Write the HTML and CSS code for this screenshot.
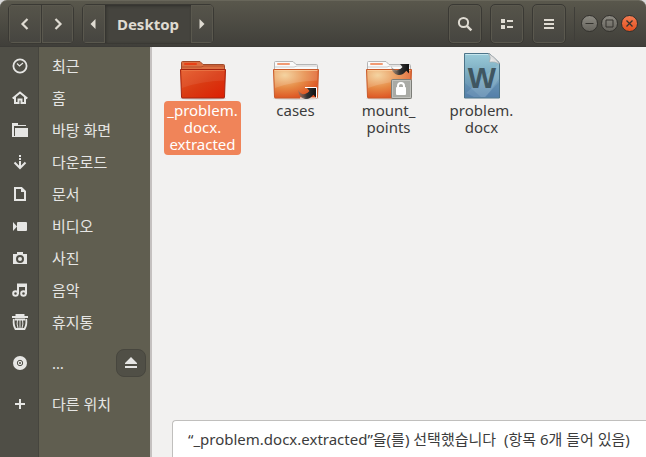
FILE: index.html
```
<!DOCTYPE html>
<html lang="ko">
<head>
  <meta charset="UTF-8" />
  <meta name="viewport" content="width=device-width, initial-scale=1" />
  <title>Desktop</title>
  <link rel="stylesheet" href="styles.css">
</head>
<body>
  <div class="window">
    <header class="titlebar">
      <div class="button-group">
        <button class="tool nav" aria-label="Back">
          <svg width="16" height="16" viewBox="0 0 16 16"><path d="M10.5 3 5.5 8l5 5" fill="none" stroke="currentColor" stroke-width="2.2"/></svg>
        </button>
        <button class="tool nav" aria-label="Forward">
          <svg width="16" height="16" viewBox="0 0 16 16"><path d="m5.5 3 5 5-5 5" fill="none" stroke="currentColor" stroke-width="2.2"/></svg>
        </button>
      </div>

      <div class="button-group">
        <button class="tool arrow" aria-label="Scroll left">
          <svg width="16" height="16" viewBox="0 0 16 16"><path d="M9.5 3v10l-5-5z" fill="currentColor"/></svg>
        </button>
        <button class="tool path">Desktop</button>
        <button class="tool arrow" aria-label="Scroll right">
          <svg width="16" height="16" viewBox="0 0 16 16"><path d="M5.5 3v10l5-5z" fill="currentColor"/></svg>
        </button>
      </div>

      <div class="tools">
        <button class="tool single" aria-label="Search">
          <svg width="16" height="16" viewBox="0 0 16 16"><circle cx="6.5" cy="6.5" r="4.6" fill="none" stroke="currentColor" stroke-width="2"/><path d="m9.8 9.8 4.6 4.6" stroke="currentColor" stroke-width="2.4"/></svg>
        </button>
        <button class="tool single" aria-label="List view">
          <svg width="16" height="16" viewBox="0 0 16 16" fill="currentColor"><path d="M2 3h4v4H2zM2 9h4v4H2zM8 4h6v2H8zM8 10h6v2H8z"/></svg>
        </button>
        <button class="tool single" aria-label="Menu">
          <svg width="16" height="16" viewBox="0 0 16 16" fill="currentColor"><path d="M3 3h10v2H3zM3 7h10v2H3zM3 11h10v2H3z"/></svg>
        </button>
      </div>

      <div class="window-buttons">
        <button aria-label="Minimize"><svg width="15" height="15" viewBox="0 0 15 15"><path d="M3.5 7.5h8" stroke="currentColor"/></svg></button>
        <button aria-label="Maximize"><svg width="15" height="15" viewBox="0 0 15 15"><path d="M4 4h7v7H4z" fill="none" stroke="currentColor"/></svg></button>
        <button class="close" aria-label="Close"><svg width="15" height="15" viewBox="0 0 15 15"><path d="m4.5 4.5 6 6m0-6-6 6" stroke="currentColor" stroke-width="1.3"/></svg></button>
      </div>
    </header>

    <div class="content">
      <nav class="sidebar">
        <a class="place" href="#">
          <svg viewBox="0 0 16 16"><circle cx="8" cy="8" r="6.6" fill="none" stroke="currentColor" stroke-width="1.8"/><path d="M5 5.5 7.500 8 11 5" fill="none" stroke="currentColor" stroke-width="1.2"/></svg>
          <span>최근</span>
        </a>
        <a class="place" href="#">
          <svg viewBox="0 0 16 16"><path d="M.7 8.5 8 2.5l7.3 6M3 7v6h3.500V9.500h3V13H13V7" fill="none" stroke="currentColor" stroke-width="2"/></svg>
          <span>홈</span>
        </a>
        <a class="place" href="#">
          <svg viewBox="0 0 16 16" fill="currentColor"><path d="M0 1h6v2h8v1H2v11H0zM3 6h13v9H3z"/><path d="M1 14h4v1H1z"/></svg>
          <span>바탕 화면</span>
        </a>
        <a class="place" href="#">
          <svg viewBox="0 0 16 16"><path d="M8 1v2M8 4v2M8 7v7M2.5 8.5 8 14l5.500-5.500" fill="none" stroke="currentColor" stroke-width="2"/></svg>
          <span>다운로드</span>
        </a>
        <a class="place" href="#">
          <svg viewBox="0 0 16 16"><path d="M3 2h6.500L13 5.500V14H3z" fill="none" stroke="currentColor" stroke-width="2"/><path d="M9 2v4h4z" fill="currentColor"/></svg>
          <span>문서</span>
        </a>
        <a class="place" href="#">
          <svg viewBox="0 0 16 16" fill="currentColor"><rect x="5" y="4" width="10" height="9" rx="1"/><path d="m1 4 4 4.500L1 13z"/></svg>
          <span>비디오</span>
        </a>
        <a class="place" href="#">
          <svg viewBox="0 0 16 16"><path fill="currentColor" fill-rule="evenodd" d="M5 2h6v2h4v10H1V4h4zM8 5a4 4 0 1 0 0 8 4 4 0 0 0 0-8zm0 2a2 2 0 1 1 0 4 2 2 0 0 1 0-4z"/></svg>
          <span>사진</span>
        </a>
        <a class="place" href="#">
          <svg viewBox="0 0 16 16"><path d="M6 12V2.500h8V12M6 4h8" fill="none" stroke="currentColor" stroke-width="2"/><circle cx="3.500" cy="11.500" r="2.300" fill="none" stroke="currentColor" stroke-width="2"/><circle cx="11.500" cy="11.500" r="2.300" fill="none" stroke="currentColor" stroke-width="2"/></svg>
          <span>음악</span>
        </a>
        <a class="place" href="#">
          <svg viewBox="0 0 16 16" fill="none" stroke="currentColor"><path d="M3.500 1h9M0 3h16" stroke-width="1.8"/><path d="M3 5.500h10M1.800 5q-.8 6 1.700 10h9q2.500-4 1.700-10" stroke-width="1.8"/><path d="M5.500 6q-1 4 .5 8M10.500 6q1 4-.5 8M8 6v8" stroke-width="1"/></svg>
          <span>휴지통</span>
        </a>
        <div class="place section">
          <svg viewBox="0 0 16 16"><circle cx="8" cy="8" r="7" fill="currentColor"/><circle cx="8" cy="8" r="2.700" fill="none" stroke="#4f4e46"/><circle cx="8" cy="8" r="1" fill="#4f4e46"/></svg>
          <a href="#">…</a>
          <button class="eject" aria-label="Eject">
            <svg viewBox="0 0 16 16" fill="currentColor"><path d="m8 2 6 6v1H2V8zM2 11h12v2H2z"/></svg>
          </button>
        </div>
        <a class="place section" href="#">
          <svg viewBox="0 0 16 16"><path d="M8 3v10M3 8h10" stroke="currentColor" stroke-width="2"/></svg>
          <span>다른 위치</span>
        </a>
      </nav>

      <main class="view">
        <svg class="defs" width="0" height="0" aria-hidden="true">
          <defs>
            <linearGradient id="red" x1="0" y1="0" x2="1" y2="1"><stop offset="0" stop-color="#e55a28"/><stop offset=".5" stop-color="#d93a12"/><stop offset="1" stop-color="#dc1e04"/></linearGradient>
            <radialGradient id="orange" cx=".25" cy=".2" r=".9"><stop offset="0" stop-color="#f3cd92"/><stop offset=".5" stop-color="#e68a45"/><stop offset="1" stop-color="#dc4a1c"/></radialGradient>
            <linearGradient id="blue" x1="0" y1="0" x2="0" y2="1"><stop offset="0" stop-color="#9acbd9"/><stop offset=".5" stop-color="#78a7bd"/><stop offset="1" stop-color="#5b84ad"/></linearGradient>
            <linearGradient id="fold" x1="0" y1="1" x2="1" y2="0"><stop offset="0" stop-color="#fff"/><stop offset="1" stop-color="#bbb"/></linearGradient>
            <linearGradient id="link" x1="0" y1="0" x2="1" y2="0"><stop offset="0" stop-color="#777" stop-opacity=".5"/><stop offset=".5" stop-color="#333"/><stop offset="1" stop-color="#111"/></linearGradient>
            <g id="folder-shape">
              <ellipse cx="24" cy="45.5" rx="23" ry="1.5" fill="#000" opacity=".12"/>
              <path d="M2.500 22V9.500q0-1 1-1H21l3 3h20.500q1 0 1 1V22z" fill="#fafafa" stroke="#b5b5b5"/>
              <path d="M3 14h19l3-1h20" stroke="#ccc" fill="none"/>
              <rect x="5" y="10" width="13" height="2" rx="1" fill="#f19a73"/>
              <path d="M1.500 16.500h45L45.500 44q0 1-1 1h-41q-1 0-1-1z" fill="url(#orange)" stroke="#c95a2b"/>
              <path d="M2.500 17.500h43l-.3 10Q22 28 3 35z" fill="#fff" opacity=".14"/>
              <path d="M2.500 17.500h43" stroke="#ffd7a8" opacity=".7"/>
            </g>
            <path id="link-shape" d="M0 2q3 5 7 4 3-1 4.500-3L9 0h9v9.500l-2.700-2.700Q12 11.500 7 11 1 10 0 2z" fill="url(#link)"/>
          </defs>
        </svg>

        <div class="files">
          <figure class="file selected">
            <svg viewBox="0 0 48 48">
              <ellipse cx="24" cy="45.5" rx="23" ry="1.5" fill="#000" opacity=".15"/>
              <path d="M2.500 22V9.500q0-1 1-1H21l3 3h20.500q1 0 1 1V22z" fill="#dc7043" stroke="#9f4a2b"/>
              <path d="M3 14h19l3-1h20" stroke="#b5512c" fill="none"/>
              <rect x="5" y="10" width="13" height="2" rx="1" fill="#e84016"/>
              <path d="M1.500 16.500h45L45.500 44q0 1-1 1h-41q-1 0-1-1z" fill="url(#red)" stroke="#a7240f"/>
              <path d="M2.500 17.500h43l-.3 10Q22 28 3 35z" fill="#fff" opacity=".07"/>
              <path d="M2.500 17.500h43" stroke="#ed8050" opacity=".7"/>
            </svg>
            <figcaption>_problem.<br>docx.<br>extracted</figcaption>
          </figure>

          <figure class="file">
            <svg viewBox="0 0 48 48">
              <use href="#folder-shape"/>
              <path d="M33 34.500h11.500v10.500H28" fill="none" stroke="#fff"/>
              <use href="#link-shape" x="26" y="35"/>
            </svg>
            <figcaption>cases</figcaption>
          </figure>

          <figure class="file">
            <svg viewBox="0 0 48 48">
              <use href="#folder-shape"/>
              <use href="#link-shape" x="26" y="11"/>
              <rect x="26.500" y="26.500" width="20" height="19" rx="1" fill="#a9aaa5" stroke="#7c7d78"/>
              <path d="M27.500 27.500h18v17h-18z" fill="none" stroke="#c1c2bd"/>
              <path d="M33 35v-2q0-3 3-3t3 3v2" fill="none" stroke="#fff" stroke-width="2"/>
              <rect x="31" y="34" width="10" height="8" rx="1" fill="#fff"/>
            </svg>
            <figcaption>mount_<br>points</figcaption>
          </figure>

          <figure class="file">
            <svg viewBox="0 0 48 48">
              <path d="M6.500.5H31q4 3 10.500 9.500v35h-35z" fill="url(#blue)" stroke="#4c7489"/>
              <path d="m8 40 16-14 17-15v18L27 44H16z" fill="#c8e0ed" opacity=".2"/>
              <path d="m7 30 16 14H7zM41 26v18H28z" fill="#3d6b9c" opacity=".2"/>
              <path d="M7.500 1.500H30" stroke="#c5e5ed"/>
              <path d="M30.500.5q3 4 1 8.500 5-1 10 2Q37 4 30.500.5z" fill="url(#fold)" stroke="#aaa" stroke-width=".6"/>
              <text class="doc-letter" x="24" y="35" text-anchor="middle">W</text>
            </svg>
            <figcaption>problem.<br>docx</figcaption>
          </figure>
        </div>

        <div class="status">“_problem.docx.extracted”을(를) 선택했습니다&nbsp; (항목 6개 들어 있음)</div>
      </main>
    </div>
  </div>
</body>
</html>
```

FILE: styles.css
```
* {
  box-sizing: border-box;
}

body {
  margin: 0;
  background: #d9d9d9;
  font-family: "Noto Sans", "Noto Sans CJK KR", sans-serif;
  font-size: 15px;
  color: #3c3c3c;
}

button {
  margin: 0;
  padding: 0;
  border: 0;
  font: inherit;
  color: inherit;
}

a {
  color: inherit;
  text-decoration: none;
}

svg {
  display: block;
  flex: none;
}

.window {
  display: flex;
  flex-direction: column;
  min-height: 100vh;
}

/* title bar */
.titlebar {
  display: flex;
  align-items: center;
  gap: 8px;
  height: 47px;
  padding: 0 8px;
  border-top: 1px solid #68665a;
  border-bottom: 1px solid #3c3b37;
  border-radius: 7px 7px 0 0;
  background: linear-gradient(#59574c, #403f3a);
  color: #dfdbd2;
}

.button-group {
  display: flex;
  height: 40px;
  border: 1px solid #3a3934;
  border-radius: 5px;
  overflow: hidden;
}

.tool {
  display: flex;
  align-items: center;
  justify-content: center;
  background: linear-gradient(#56544a, #464540);
  box-shadow: inset 0 0 0 1px #5a584e;
}

.nav {
  width: 32px;
}

.nav + .nav {
  border-left: 1px solid #3a3934;
}

.arrow {
  width: 22px;
}

.path {
  width: 86px;
  background: #45443e;
  box-shadow: inset 1px 1px 3px #2f2e2a;
  font-weight: bold;
}

.tools {
  display: flex;
  gap: 8px;
  margin-left: auto;
}

.single {
  width: 34px;
  height: 40px;
  border: 1px solid #3a3934;
  border-radius: 5px;
}

.window-buttons {
  display: flex;
  align-items: center;
  gap: 3px;
  height: 34px;
  padding-left: 6px;
  border-left: 1px solid #3f3e39;
}

.window-buttons button {
  width: 17px;
  height: 17px;
  border: 1px solid #33322e;
  border-radius: 50%;
  background: linear-gradient(#8c8a82, #66645d);
  color: #34332e;
}

.window-buttons .close {
  background: linear-gradient(#f37c52, #e4501f);
}

.content {
  display: flex;
  flex: 1;
}

/* places */
.sidebar {
  flex: none;
  width: 152px;
  padding-top: 3px;
  border-right: 2px solid #c5c1c0;
  background: linear-gradient(to right, #4f4e46 38px, #46453e 38px, #46453e 39px, #605e50 39px);
  color: #e6e6e4;
}

.place {
  display: flex;
  align-items: center;
  gap: 24px;
  height: 32px;
  padding: 0 4px 0 12px;
  line-height: 20px;
}

.place svg {
  width: 16px;
  height: 16px;
}

.section {
  margin-top: 9px;
}

.eject {
  display: flex;
  align-items: center;
  justify-content: center;
  width: 30px;
  height: 28px;
  margin-left: auto;
  border: 1px solid #47463e;
  border-radius: 8px;
  background: #504f46;
}

/* icon view */
.view {
  display: flex;
  flex: 1;
  flex-direction: column;
  min-width: 0;
  background: #f2f1f0;
}

.defs {
  position: absolute;
}

.files {
  display: grid;
  grid-template-columns: repeat(auto-fill, 93px);
  padding: 6px 0 0 4px;
}

.file {
  display: flex;
  flex-direction: column;
  align-items: center;
  margin: 0;
}

.file svg {
  width: 48px;
  height: 48px;
}

.file figcaption {
  padding: 1px 3px 2px;
  border-radius: 4px;
  line-height: 17px;
  text-align: center;
}

.selected figcaption {
  background: #f08459;
  color: #fff;
}

.doc-letter {
  font-family: "Liberation Sans", sans-serif;
  font-size: 30px;
  font-weight: bold;
  fill: #3f5661;
}

.status {
  height: 37px;
  margin: auto 0 0 20px;
  padding: 0 15px;
  border: 1px solid #c0bfbd;
  border-width: 1px 0 0 1px;
  border-radius: 4px 0 0 0;
  background: #fff;
  line-height: 36px;
  white-space: nowrap;
}
```
